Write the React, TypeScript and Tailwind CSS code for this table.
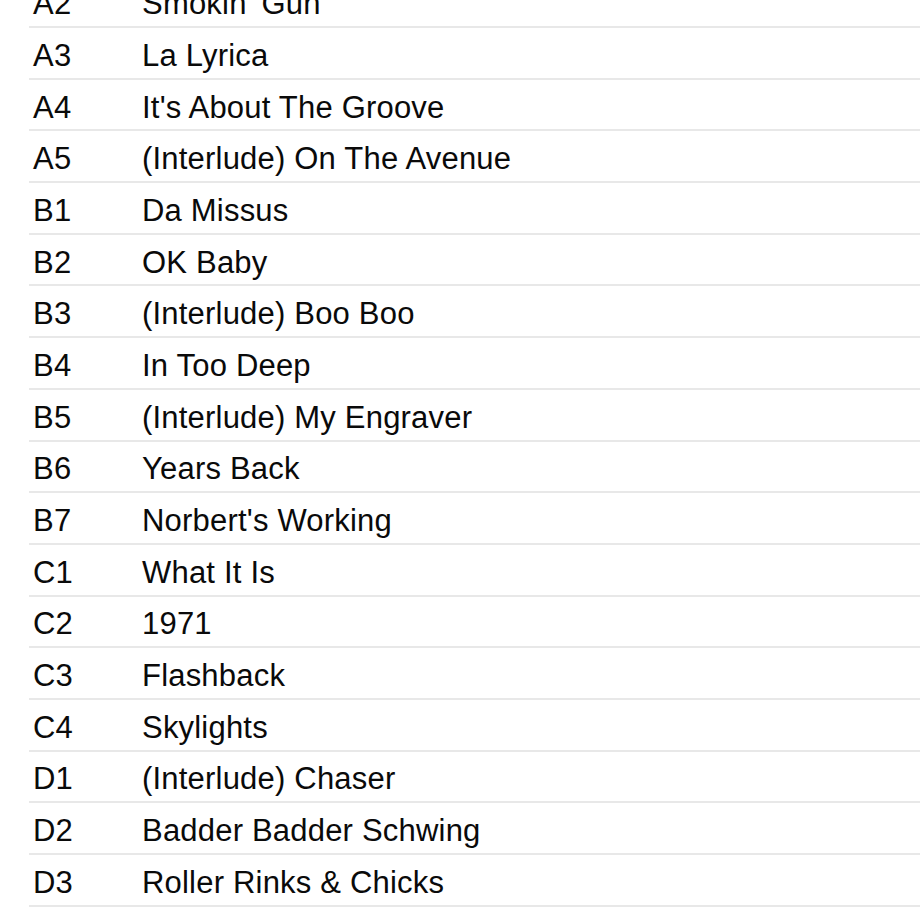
import React from "react";

const tracks: [string, string][] = [
  ["A2", "Smokin' Gun"],
  ["A3", "La Lyrica"],
  ["A4", "It's About The Groove"],
  ["A5", "(Interlude) On The Avenue"],
  ["B1", "Da Missus"],
  ["B2", "OK Baby"],
  ["B3", "(Interlude) Boo Boo"],
  ["B4", "In Too Deep"],
  ["B5", "(Interlude) My Engraver"],
  ["B6", "Years Back"],
  ["B7", "Norbert's Working"],
  ["C1", "What It Is"],
  ["C2", "1971"],
  ["C3", "Flashback"],
  ["C4", "Skylights"],
  ["D1", "(Interlude) Chaser"],
  ["D2", "Badder Badder Schwing"],
  ["D3", "Roller Rinks & Chicks"],
];

export default function App() {
  return (
    <div
      className="w-[920px] h-[920px] overflow-hidden bg-white"
      style={{ fontFamily: '"Liberation Sans", Arial, Helvetica, sans-serif' }}
    >
      <div className="mt-[-23.7px] ml-[29px]">
        {tracks.map(([pos, title]) => (
          <div
            key={pos}
            className="flex items-center h-[51.7px] pt-[5px] border-b-2 border-[#e8e8e8] text-[31px] leading-none text-[#0a0a0a] tracking-[0.2px]"
          >
            <div className="w-[113px] pl-[4px] shrink-0">{pos}</div>
            <div className="whitespace-nowrap">{title}</div>
          </div>
        ))}
      </div>
    </div>
  );
}
